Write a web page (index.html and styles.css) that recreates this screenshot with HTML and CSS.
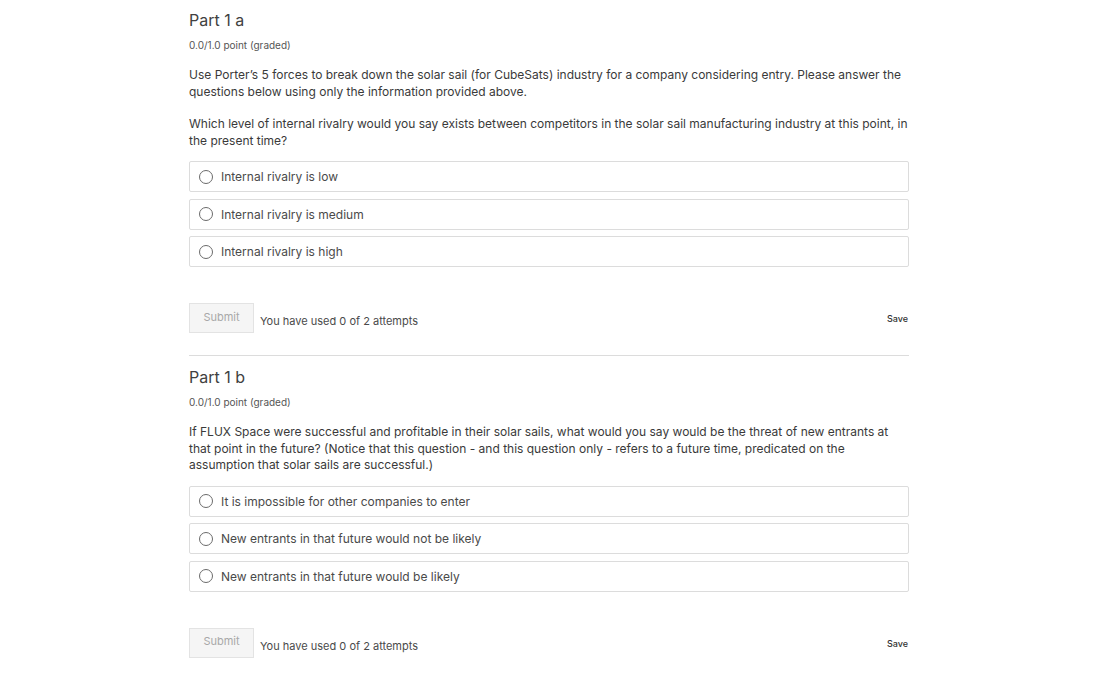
FILE: index.html
```html
<!DOCTYPE html>
<html>
<head>
<meta charset="utf-8">
<link rel="stylesheet" href="styles.css">
</head>
<body>
<main class="page">
  <section class="problem">
    <h2 class="title">Part 1 a</h2>
    <div class="points">0.0/1.0 point (graded)</div>
    <p class="text">Use Porter’s 5 forces to break down the solar sail (for CubeSats) industry for a company considering entry. Please answer the questions below using only the information provided above.</p>
    <p class="text q">Which level of internal rivalry would you say exists between competitors in the solar sail manufacturing industry at this point, in the present time?</p>
    <div class="options">
      <label class="option"><span class="radio"></span>Internal rivalry is low</label>
      <label class="option"><span class="radio"></span>Internal rivalry is medium</label>
      <label class="option"><span class="radio"></span>Internal rivalry is high</label>
    </div>
    <div class="actions">
      <button class="submit">Submit</button>
      <span class="attempts">You have used 0 of 2 attempts</span>
      <span class="save">Save</span>
    </div>
  </section>
  <hr class="divider">
  <section class="problem">
    <h2 class="title">Part 1 b</h2>
    <div class="points">0.0/1.0 point (graded)</div>
    <p class="text">If FLUX Space were successful and profitable in their solar sails, what would you say would be the threat of new entrants at that point in the future? (Notice that this question - and this question only - refers to a future time, predicated on the assumption that solar sails are successful.)</p>
    <div class="options">
      <label class="option"><span class="radio"></span>It is impossible for other companies to enter</label>
      <label class="option"><span class="radio"></span>New entrants in that future would not be likely</label>
      <label class="option"><span class="radio"></span>New entrants in that future would be likely</label>
    </div>
    <div class="actions">
      <button class="submit">Submit</button>
      <span class="attempts">You have used 0 of 2 attempts</span>
      <span class="save">Save</span>
    </div>
  </section>
</main>
</body>
</html>
```

FILE: styles.css
```css
html, body {
  margin: 0;
  padding: 0;
  background: #fff;
}
body {
  font-family: Inter, "Noto Sans", sans-serif;
  color: #333;
}
.page {
  width: 720px;
  margin-left: 189px;
  padding-top: 10px;
}
.title {
  margin: 0;
  font-size: 16px;
  line-height: 20px;
  font-weight: 400;
  color: #414141;
}
.points {
  margin-top: 9px;
  font-size: 10px;
  line-height: 12px;
  color: #555;
}
.text {
  margin: 16px 0 0;
  font-size: 12px;
  line-height: 16.5px;
  color: #3a3a3a;
}
.options {
  margin-top: 12px;
  display: flex;
  flex-direction: column;
  gap: 6.5px;
}
.option {
  display: flex;
  align-items: center;
  gap: 8px;
  height: 31px;
  box-sizing: border-box;
  padding-left: 9px;
  border: 1px solid #dcdcdc;
  border-radius: 2px;
  font-size: 12px;
  color: #4a4a4a;
}
.radio {
  width: 12px;
  height: 12px;
  border: 1.3px solid #6b6b6b;
  border-radius: 50%;
  box-sizing: content-box;
}
.actions {
  margin-top: 36px;
  display: flex;
  align-items: center;
}
.submit {
  height: 30px;
  width: 65px;
  box-sizing: border-box;
  border: 1px solid #e3e3e3;
  background: #f5f5f5;
  color: #a8a8a8;
  font-family: Inter, "Noto Sans", sans-serif;
  font-size: 11px;
  padding: 0 0 3px;
  border-radius: 0;
}
.attempts {
  margin-left: 6px;
  margin-top: 6px;
  font-size: 11px;
  color: #4a4a4a;
}
.save {
  margin-left: auto;
  margin-top: 1px;
  font-size: 9px;
  font-weight: 500;
  color: #333;
  padding-right: 1px;
}
.divider {
  margin: 22px 0 0;
  border: 0;
  border-top: 1px solid #dcdcdc;
  height: 0;
}
.divider + .problem {
  margin-top: 11px;
}
```
